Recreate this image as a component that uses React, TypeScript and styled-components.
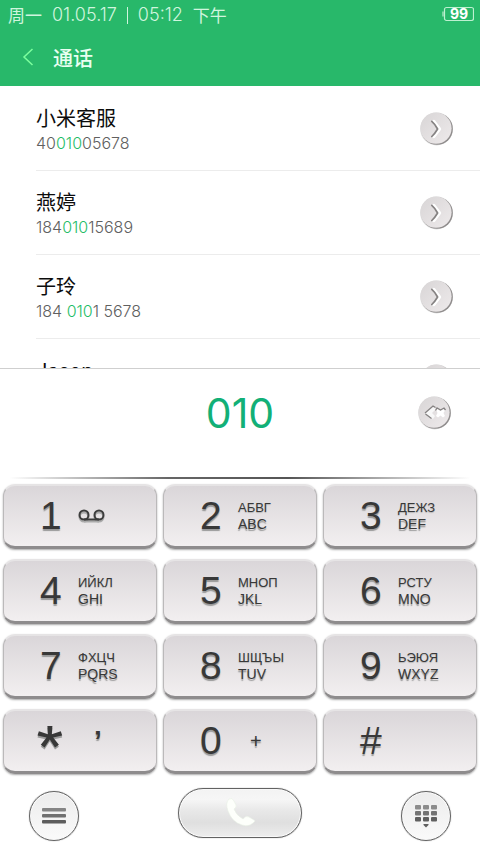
import React from "react";
import styled, { createGlobalStyle } from "styled-components";

const Global = createGlobalStyle`
  *, *::before, *::after { box-sizing: border-box; }
  body { margin: 0; background: #fff; }
  button { margin: 0; padding: 0; border: 0; background: none; cursor: pointer; color: inherit; font: inherit; }
`;

const ui = `Inter, "Noto Sans CJK SC", sans-serif`;
const cjk = `"Noto Sans CJK SC", sans-serif`;
const keyFont = `"Liberation Sans", Arial, sans-serif`;

const Screen = styled.main`
  display: flex;
  flex-direction: column;
  min-height: 100vh;
  overflow: hidden;
  background: #fff;
  font-family: ${ui};
`;

const Top = styled.header`
  background: #28b86a;
  color: #e9fff1;
`;

const StatusBar = styled.div`
  display: flex;
  justify-content: space-between;
  align-items: center;
  height: 30px;
  padding: 0 6px 0 8px;
  font-size: 18px;
  font-weight: 400;
  line-height: 28px;
  color: #d0f5de;
`;

const Clock = styled.div`
  display: flex;
  align-items: center;
  gap: 10px;
`;

const Stroke = styled.span`
  width: 1px;
  height: 17px;
  background: #d0f5de;
`;

const Day = styled.span`
  font-family: ${cjk};
  font-size: 17px;
`;

const Time = styled.time`
  font-weight: 300;
`;

const Battery = styled.svg`
  display: block;
  width: 32px;
  height: 16px;
  margin-bottom: 3px;
`;

const TitleBar = styled.div`
  display: flex;
  align-items: center;
  gap: 17px;
  height: 56px;
  padding: 0 20px;
`;

const BackButton = styled.button`
  display: grid;
  width: 16px;
  height: 28px;
  padding-bottom: 3px;
  place-items: center;
`;

const Title = styled.h1`
  margin: 0;
  font-family: ${cjk};
  font-size: 20px;
  font-weight: 500;
  line-height: 56px;
`;

const List = styled.ul`
  height: 282px;
  margin: 0;
  padding: 1px 0 0;
  overflow: hidden;
  list-style: none;
`;

const Contact = styled.li`
  display: flex;
  align-items: center;
  justify-content: space-between;
  height: 84px;
  margin-left: 36px;
  padding-right: 26px;
  border-bottom: 1px solid #ececec;
`;

const Name = styled.div`
  padding-top: 2px;
  font-size: 20px;
  line-height: 26px;
  color: #0c0c0c;
`;

const Phone = styled.div`
  font-size: 16px;
  font-weight: 300;
  line-height: 22px;
  color: #606060;
`;

const Match = styled.span`
  color: #1fbd68;
`;

const RoundButton = styled.button`
  display: grid;
  flex: none;
  width: 34px;
  height: 34px;
  place-items: center;
`;

const Dialer = styled.section`
  flex: 1;
  border-top: 1px solid #cfcfcf;
`;

const Display = styled.div`
  display: grid;
  grid-template-columns: 1fr auto 1fr;
  align-items: center;
  height: 108px;
  padding: 0 28px 20px;
`;

const Typed = styled.output`
  grid-column: 2;
  font-size: 41px;
  font-weight: 400;
  line-height: 52px;
  color: #12b077;
`;

const EraseSlot = styled.div`
  display: flex;
  justify-content: flex-end;
`;

const Rule = styled.div`
  height: 2px;
  background: linear-gradient(90deg, #fff 2%, #666 35%, #555 60%, #fff 98%);
`;

const Keypad = styled.div`
  display: grid;
  grid-template-columns: repeat(3, minmax(0, 1fr));
  gap: 10px 6px;
  padding: 5px 3px 0;
`;

const Key = styled.button`
  display: grid;
  grid-template-columns: 36px 38px 1fr;
  align-items: center;
  height: 65px;
  padding-bottom: 1px;
  border: 1px solid #bbb9ba;
  border-top: 2px solid #e6e4e5;
  border-bottom: 3px solid #8e8c8d;
  border-radius: 12px;
  background: linear-gradient(#dad6d9, #f2eff0);
  box-shadow: 0 1px 2px #aaa;
  font-family: ${keyFont};
  color: #383838;
  text-align: left;
  text-shadow: 0 2px 1px #9a9a9a;
`;

const Digit = styled.span`
  grid-column: 2;
  font-size: 39px;
  line-height: 44px;
`;

const Star = styled.svg`
  display: block;
  width: 26px;
  height: 28px;
  margin: 0 0 4px -3px;
`;

const Letters = styled.span`
  display: grid;
  font-size: 14px;
  line-height: 17px;
`;

const Cyrillic = styled.span`
  font-size: 13px;
  text-shadow: 0 1px 1px #b5b5b5;
`;

const Latin = styled.span`
  font-size: 14px;
`;

const Extra = styled.span<{ $indent: number; $large?: boolean }>`
  padding-left: ${(p) => p.$indent}px;
  font-size: ${(p) => (p.$large ? 28 : 20)}px;
  font-weight: ${(p) => (p.$large ? 700 : 400)};
  line-height: 24px;
`;

const Actions = styled.nav`
  display: flex;
  align-items: flex-start;
  justify-content: space-between;
  padding: 14px 29px 0;
`;

const Action = styled.button<{ $wide?: boolean }>`
  display: grid;
  place-items: center;
  width: ${(p) => (p.$wide ? 124 : 50)}px;
  height: 50px;
  margin-top: ${(p) => (p.$wide ? 0 : 3)}px;
  border: 1px solid #626262;
  border-radius: 25px;
  background: ${(p) =>
    p.$wide
      ? "linear-gradient(#f3f3f3, #f6f6f6 22%, #e8e8e8 45%, #dfdfdf 70%, #ededed)"
      : "linear-gradient(#ececec, #fafafa)"};
  box-shadow: inset 0 0 0 1px #f8f8f8, 0 0 1px #777;
`;

const Disc = ({ children, id }: { children: React.ReactNode; id: string }) => (
  <svg width="34" height="34" viewBox="0 0 34 34" aria-hidden="true">
    <defs>
      <linearGradient id={id} x1="0" y1="0" x2="1" y2="1">
        <stop offset="0" stopColor="#d8d5d6" />
        <stop offset="1" stopColor="#eeeaeb" />
      </linearGradient>
    </defs>
    <circle cx="16.6" cy="17" r="16.4" fill="#dedede" />
    <circle cx="17" cy="17" r="15.8" fill="#8f8c8c" />
    <circle cx="16" cy="16.2" r="15.6" fill={`url(#${id})`} />
    {children}
  </svg>
);

const Chevron = ({ id }: { id: string }) => (
  <Disc id={id}>
    <path d="M13.8 9.5 19.5 17l-5.7 7.5" fill="none" stroke="#fff" strokeWidth="3.4" strokeLinecap="round" strokeLinejoin="round" />
    <path d="M11.8 9.3Q15 12 17.6 17 15 21.5 11.8 24.5" fill="none" stroke="#858282" strokeWidth="1.7" strokeLinecap="round" strokeLinejoin="round" />
  </Disc>
);

const EraseIcon = () => (
  <Disc id="erase">
    <path d="m15 11-8 6 8 6 2-3-3-3 4-4z" fill="#f8f8f8" />
    <path d="M18 13.5 20.5 13l2 2 2.5-2 2 1.5-1.5 2.5 1.5 3-2 1.5-2.5-2-2.5 2-2-1.5 1.5-3z" fill="#fff" />
    <path d="m7 17 8-7 2.5 1.5M7.5 18l6 4.5M17.5 14.5 19 12l3.500 2L26 12l1.500 2" fill="none" stroke="#858282" strokeWidth="1.3" />
  </Disc>
);

const Voicemail = () => (
  <svg width="27" height="15" viewBox="0 0 27 15" aria-hidden="true">
    {["#aaa", "#3c3c3c"].map((color, i) => (
      <g key={color} fill="none" stroke={color} strokeWidth="2" transform={`translate(0 ${i ? 1 : 3})`}>
        <circle cx="6" cy="6" r="4.5" />
        <circle cx="21" cy="6" r="4.5" />
        <path d="M6 10.5h15" />
      </g>
    ))}
  </svg>
);

const StarIcon = () => (
  <Star viewBox="0 0 26 28" aria-label="*">
    {["#9c9c9c", "#383838"].map((color, i) => (
      <path
        key={color}
        transform={`translate(0 ${i ? 0 : 2})`}
        d="M10.4 1h5l-.6 8.200 9-2.900 1.400 4.200-9 2 5.700 7.200-3.900 2.700-5.200-7.800-5.200 7.800-3.800-2.700 5.700-7.200-9-2 1.400-4.200 9 2.900z"
        fill={color}
      />
    ))}
  </Star>
);

const MenuIcon = () => (
  <svg width="26" height="18" viewBox="0 0 26 18" aria-hidden="true">
    <rect x="1" y="1" width="24" height="3.5" rx="1" fill="#858585" />
    <rect x="1" y="7" width="24" height="3.5" rx="1" fill="#707070" />
    <rect x="1" y="13" width="24" height="3.5" rx="1" fill="#5d5d5d" />
  </svg>
);

const GridIcon = () => (
  <svg width="22" height="24" viewBox="0 0 22 24" aria-hidden="true">
    {[0, 1, 2].map((r) =>
      [0, 1, 2].map((c) => (
        <rect key={`${r}${c}`} x={c * 8} y={r * 6 + 1} width="6" height="4.5" rx="1" fill={["#8c8c8c", "#747474", "#606060"][r]} />
      ))
    )}
    <path d="M8.5 20h5v1L11 23.5 8.5 21z" fill="#606060" />
  </svg>
);

const CallIcon = () => (
  <svg width="32" height="32" viewBox="0 0 32 32" aria-hidden="true">
    <path
      d="M5 2q3-2 5 2l2 4q1 2-2 4 2 6 9 10 3-4 6-2l5 3q2 1-1 3-4 4-11 2Q8 25 4 14 1 6 5 2z"
      fill="#fdfffb"
      stroke="#e8f0e4"
      strokeWidth="0.6"
    />
  </svg>
);

const contacts = [
  { name: "小米客服", phone: ["40", "010", "05678"] },
  { name: "燕婷", phone: ["184", "010", "15689"] },
  { name: "子玲", phone: ["184 ", "010", "1 5678"] },
  { name: "Jason", phone: [] },
];

const letterKeys: Record<string, [string, string]> = {
  "2": ["АБВГ", "ABC"],
  "3": ["ДЕЖЗ", "DEF"],
  "4": ["ИЙКЛ", "GHI"],
  "5": ["МНОП", "JKL"],
  "6": ["РСТУ", "MNO"],
  "7": ["ФХЦЧ", "PQRS"],
  "8": ["ШЩЪЫ", "TUV"],
  "9": ["ЬЭЮЯ", "WXYZ"],
};

const KeyExtra = ({ digit }: { digit: string }) => {
  const pair = letterKeys[digit];
  if (pair)
    return (
      <Letters>
        <Cyrillic>{pair[0]}</Cyrillic>
        <Latin>{pair[1]}</Latin>
      </Letters>
    );
  if (digit === "1") return <Voicemail />;
  if (digit === "*") return <Extra $indent={16} $large>’</Extra>;
  if (digit === "0") return <Extra $indent={12}>+</Extra>;
  return null;
};

export default function App() {
  return (
    <Screen>
      <Global />
      <Top>
        <StatusBar>
          <Clock>
            <Day>周一</Day>
            <Time>01.05.17</Time>
            <Stroke />
            <Time>05:12</Time>
            <Day>下午</Day>
          </Clock>
          <Battery viewBox="0 0 32 16" role="img" aria-label="99">
            <path d="M1 5.5v5" stroke="#a6e6bf" strokeWidth="1.4" />
            <rect x="2.5" y="1.5" width="29" height="13" rx="2" fill="none" stroke="#bdf0d0" strokeWidth="1.2" />
            <text x="17" y="13" textAnchor="middle" fontFamily="Inter, sans-serif" fontWeight="700" fontSize="14" fill="#fff">99</text>
          </Battery>
        </StatusBar>
        <TitleBar>
          <BackButton aria-label="返回">
            <svg width="12" height="18" viewBox="0 0 12 18" aria-hidden="true">
              <path d="M10.5 1 2 9l8.5 8" fill="none" stroke="#7dff9e" strokeWidth="1.5" />
            </svg>
          </BackButton>
          <Title>通话</Title>
        </TitleBar>
      </Top>
      <List>
        {contacts.map((c, i) => (
          <Contact key={c.name}>
            <div>
              <Name>{c.name}</Name>
              <Phone>
                {c.phone.length ? (
                  <>
                    {c.phone[0]}
                    <Match>{c.phone[1]}</Match>
                    {c.phone[2]}
                  </>
                ) : (
                  <br />
                )}
              </Phone>
            </div>
            <RoundButton aria-label={c.name}>
              <Chevron id={`disc${i}`} />
            </RoundButton>
          </Contact>
        ))}
      </List>
      <Dialer>
        <Display>
          <span />
          <Typed>010</Typed>
          <EraseSlot>
            <RoundButton aria-label="删除">
              <EraseIcon />
            </RoundButton>
          </EraseSlot>
        </Display>
        <Rule />
        <Keypad>
          {["1", "2", "3", "4", "5", "6", "7", "8", "9", "*", "0", "#"].map((d) => (
            <Key key={d}>
              <Digit>{d === "*" ? <StarIcon /> : d}</Digit>
              <KeyExtra digit={d} />
            </Key>
          ))}
        </Keypad>
        <Actions>
          <Action aria-label="菜单">
            <MenuIcon />
          </Action>
          <Action $wide aria-label="拨打">
            <CallIcon />
          </Action>
          <Action aria-label="收起键盘">
            <GridIcon />
          </Action>
        </Actions>
      </Dialer>
    </Screen>
  );
}
